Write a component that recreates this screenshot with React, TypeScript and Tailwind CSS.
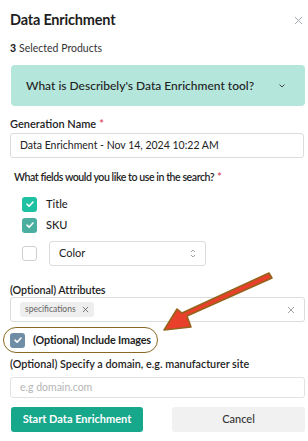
import React from "react";

const Check = ({ color = "#1fc1a3" }: { color?: string }) => (
  <div className="w-[15px] h-[15px] rounded-[3px] flex items-center justify-center shrink-0" style={{ backgroundColor: color }}>
    <svg width="10" height="10" viewBox="0 0 10 10" fill="none">
      <path d="M2 5.2 L4.1 7.2 L8 3" stroke="white" strokeWidth="1.6" strokeLinecap="round" strokeLinejoin="round" />
    </svg>
  </div>
);

export default function App() {
  return (
    <div className="relative w-[308px] h-[441px] bg-white overflow-hidden text-[#1e1e1e]" style={{ fontFamily: "Lato, 'Open Sans', sans-serif" }}>
      <div className="h-[40px] flex items-center justify-between pl-[10px] pr-[5px]">
        <div className="text-[14.5px] font-bold tracking-[-0.2px]">Data Enrichment</div>
        <svg width="9" height="9" viewBox="0 0 10 10">
          <path d="M1 1 L9 9 M9 1 L1 9" stroke="#9ca3af" strokeWidth="1" />
        </svg>
      </div>
      <div className="h-[17px] flex items-center pl-[10px] text-[10.5px] text-[#333]">
        <span className="font-bold text-[#111] mr-[3px]">3</span>Selected Products
      </div>
      <div className="ml-[11px] mr-[3px] mt-[8px] h-[41px] rounded-[4px] bg-[#b4e6dc] flex items-center justify-between pl-[15px] pr-[19px]">
        <span className="text-[12px] font-medium text-[#222]">What is Describely's Data Enrichment tool?</span>
        <svg width="8" height="6" viewBox="0 0 8 6"><path d="M1.5 1.5 L4 4 L6.5 1.5" stroke="#444" strokeWidth="1" fill="none" /></svg>
      </div>

      <div className="h-[16px] mt-[10px] flex items-center pl-[10px] text-[11px] font-semibold">
        Generation Name<span className="text-[#e0475a] ml-[3px]">*</span>
      </div>
      <div className="ml-[10px] mr-[4px] mt-[1px] h-[25px] border border-[#dcdcdc] rounded-[3px] flex items-center pl-[9px] text-[10.5px] text-[#222]">
        Data Enrichment - Nov 14, 2024 10:22 AM
      </div>

      <div className="h-[16px] mt-[12px] flex items-center pl-[14px] text-[10.6px] font-semibold tracking-[-0.45px] whitespace-nowrap">
        What fields would you like to use in the search?<span className="text-[#e0475a] ml-[3px]">*</span>
      </div>
      <div className="h-[16px] mt-[10px] pl-[22px] flex items-center gap-[9px]">
        <Check />
        <span className="text-[11px] font-medium">Title</span>
      </div>
      <div className="h-[16px] mt-[5px] pl-[22px] flex items-center gap-[9px]">
        <Check color="#4aaea0" />
        <span className="text-[11px] font-medium">SKU</span>
      </div>
      <div className="h-[25px] mt-[8px] pl-[22px] flex items-center gap-[12px]">
        <div className="w-[15px] h-[15px] rounded-[3px] border border-[#cfcfcf] bg-white" />
        <div className="w-[157px] h-[25px] border border-[#dcdcdc] rounded-[3px] flex items-center justify-between pl-[9px] pr-[9px]">
          <span className="text-[11px] text-[#222]">Color</span>
          <svg width="6" height="9" viewBox="0 0 6 9"><path d="M1 3 L3 1 L5 3 M1 6 L3 8 L5 6" stroke="#999" strokeWidth="0.9" fill="none" /></svg>
        </div>
      </div>

      <div className="h-[14px] mt-[17px] flex items-center pl-[10px] text-[10.8px] font-semibold tracking-[-0.1px]">(Optional) Attributes</div>
      <div className="ml-[10px] mr-[3px] h-[25px] border border-[#dcdcdc] rounded-[3px] flex items-center justify-between pl-[9px] pr-[9px]">
        <div className="h-[15px] px-[5px] rounded-[3px] bg-[#eeeeee] flex items-center gap-[6px] text-[8.5px] text-[#666]">
          specifications
          <svg width="7" height="7" viewBox="0 0 8 8"><path d="M1 1 L7 7 M7 1 L1 7" stroke="#666" strokeWidth="1" /></svg>
        </div>
        <svg width="8" height="8" viewBox="0 0 8 8"><path d="M1 1 L7 7 M7 1 L1 7" stroke="#999" strokeWidth="0.9" /></svg>
      </div>

      <div className="ml-[3px] mt-[5px] w-[155px] h-[26px] rounded-[13px] border-[1.5px] border-[#8a6a22] flex items-center gap-[8px] pl-[6px]">
        <Check color="#6f8ea6" />
        <span className="text-[10.8px] font-bold tracking-[-0.15px] whitespace-nowrap">(Optional) Include Images</span>
      </div>

      <div className="h-[14px] mt-[4px] flex items-center pl-[10px] text-[10.8px] font-semibold whitespace-nowrap">(Optional) Specify a domain, e.g. manufacturer site</div>
      <div className="ml-[10px] mr-[3px] mt-[6px] h-[21px] border border-[#e2e2e2] rounded-[3px] flex items-center pl-[9px] text-[10.5px] text-[#b5b5b5]">
        e.g domain.com
      </div>

      <div className="flex pl-[11px] pr-[3px] mt-[9px] justify-between">
        <div className="w-[132px] h-[25px] rounded-[3px] bg-[#17a78b] text-white text-[11px] font-bold flex items-center justify-center whitespace-nowrap">
          Start Data Enrichment
        </div>
        <div className="w-[133px] h-[25px] rounded-[3px] bg-[#f1f1f1] text-[#333] text-[11px] font-medium flex items-center justify-center">
          Cancel
        </div>
      </div>

      <svg className="absolute left-0 top-0 pointer-events-none" width="308" height="441" viewBox="0 0 308 441">
        <polygon points="269,273 272,278 187,316 191,327 164,330 177,309 182,313" fill="#e8402a" stroke="#93641c" strokeWidth="1.5" strokeLinejoin="round" />
      </svg>
    </div>
  );
}
